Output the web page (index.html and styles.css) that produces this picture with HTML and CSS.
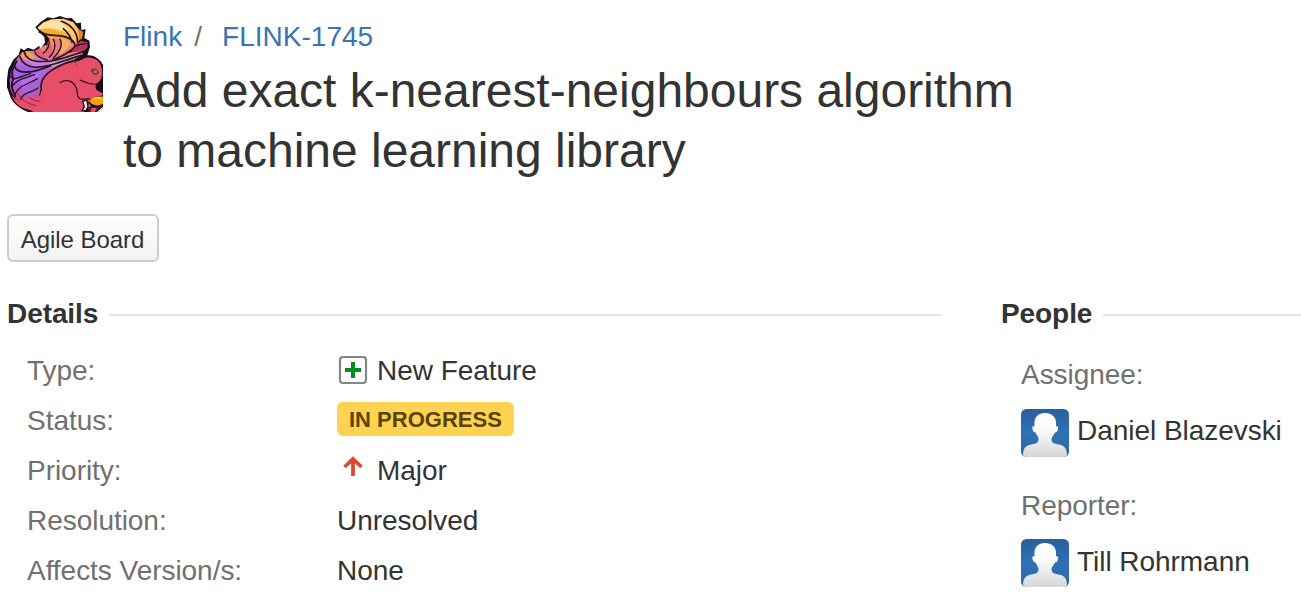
FILE: index.html
```html
<!DOCTYPE html>
<html lang="en">
<head>
<meta charset="utf-8">
<title>FLINK-1745</title>
<link rel="stylesheet" href="styles.css">
</head>
<body>
<svg width="0" height="0" class="defs" aria-hidden="true">
  <defs>
    <linearGradient id="avatar-bg" x1="0" y1="0" x2="0" y2="1"><stop offset="0" stop-color="#295f9c"/><stop offset=".5" stop-color="#2f72b5"/><stop offset="1" stop-color="#2b67a6"/></linearGradient>
    <linearGradient id="avatar-fg" x1="0" y1="0" x2="0" y2="1"><stop offset="0" stop-color="#fff"/><stop offset=".4" stop-color="#fafafa"/><stop offset="1" stop-color="#d6d6d6"/></linearGradient>
    <symbol id="person" viewBox="0 0 48 48">
      <rect width="48" height="48" rx="5.500" fill="url(#avatar-bg)"/>
      <path d="M24 4C17.500 4 13.500 8 13.500 13.500V17C11.300 17 11 18 11.500 20C12 22.500 13 23.500 14.500 23.500C15.500 26 17.500 28 17.500 30C17.500 34 15 34.500 10 35.500C4 37 2.500 39 2 46Q2.500 48 5 48H43Q45.500 48 46 46C45.500 39 44 37 38 35.500C33 34.500 30.500 34 30.500 30C30.500 28 33 26 34 23.500C35.500 23.500 36.500 22.500 37 20C37.300 18 37 17 35 17V13.500C35 8 30.500 4 24 4Z" fill="url(#avatar-fg)"/>
    </symbol>
  </defs>
</svg>
<header class="header">
  <svg class="project-avatar" viewBox="21 24 288 288">
    <defs>
      <linearGradient id="tail" gradientUnits="userSpaceOnUse" x1="90" y1="120" x2="70" y2="280">
        <stop offset="0" stop-color="#e58a78"/><stop offset=".25" stop-color="#bf70c8"/><stop offset=".45" stop-color="#a862e0"/><stop offset=".75" stop-color="#ab5bd2"/><stop offset="1" stop-color="#e04f78"/>
      </linearGradient>
      <linearGradient id="curl" gradientUnits="userSpaceOnUse" x1="170" y1="35" x2="160" y2="160">
        <stop offset="0" stop-color="#ffd98a"/><stop offset=".35" stop-color="#fbae42"/><stop offset=".6" stop-color="#f0856a"/><stop offset="1" stop-color="#dc6c8c"/>
      </linearGradient>
      <filter id="soften" x="0" y="0" width="1" height="1"><feGaussianBlur stdDeviation="1.900"/></filter>
    </defs>
    <g filter="url(#soften)">
      <!-- outline -->
      <path d="M106 58L122 42L143 28L160 31L180 24L200 31L215 30L230 46L243 44L244 66L257 64L253 90L268 98L270 116L262 142C284 140 300 154 310 172V312H84C57 301 36 283 30 263L21 238V215L25 184L40 155L56 140L62 121L72 127L84 119L101 125L118 113L120 124L135 104L133 88L118 72Z" fill="#171015"/>
      <!-- lower tail -->
      <path d="M29 215L33 188L46 159L66 133L84 128L103 129L119 121L138 110L160 140L222 132L256 122L246 141L212 162L160 182L132 212L122 244L114 275L89 290C58 286 36 264 31 244Z" fill="url(#tail)"/>
      <path d="M70 132L84 130L108 147L104 158L76 156L62 147Z" fill="#f0a05c"/>
      <path d="M104 130L122 123L142 143L136 155L116 150Z" fill="#e85d78"/>
      <path d="M84 160L106 149L142 158L196 153L150 174L102 178Z" fill="#c77fdc"/>
      <path d="M148 166L204 148L250 130L240 143L200 160L150 181Z" fill="#dba0b4"/>
      <path d="M52 170L78 178L104 180L88 192L58 196L42 210Z" fill="#a35ee4"/>
      <path d="M62 214L96 196L126 190L106 216L66 244Z" fill="#b36dea"/>
      <path d="M62 262L84 236L116 226L113 246L84 262Z" fill="#a862d8"/>
      <!-- upper curl -->
      <path d="M113 59L130 43L155 34L190 32L220 43L236 64L240 92L226 116L196 140L160 156L142 146L126 134L142 112L146 90L133 74Z" fill="url(#curl)"/>
      <path d="M113 59C132 40 160 37 184 42C206 47 211 62 200 74C177 62 146 56 118 65Z" fill="#ffe3a4"/>
      <path d="M119 66C148 58 170 66 190 82C178 87 158 84 145 80L132 74Z" fill="#ffab18"/>
      <path d="M190 41C217 45 231 66 233 90L224 108L209 84C206 69 202 58 190 51Z" fill="#ffc670"/>
      <path d="M158 93C178 90 190 101 192 116L172 138L154 146C168 127 170 110 158 93Z" fill="#f1787c"/>
      <path d="M180 92C196 92 208 100 212 112L188 134L174 140C188 124 188 108 180 92Z" fill="#f6b262"/>
      <path d="M132 132C144 126 149 118 150 104C160 121 154 138 143 147Z" fill="#f05a74"/>
      <path d="M234 62L250 72L246 92L238 96Z" fill="#e08a1c"/>
      <path d="M222 114L242 98L262 102L263 118L250 130L214 132Z" fill="#b83258"/>
      <!-- fur strands -->
      <g fill="none" stroke="#211225" stroke-width="4" stroke-linecap="round">
        <path d="M118 72C140 84 165 80 194 86C212 91 224 103 226 114M184 40C212 50 232 72 233 104M190 62C202 72 212 86 216 102M226 114C212 132 190 144 158 156" stroke-width="5"/>
        <path d="M146 92C150 108 144 124 130 136M160 94C170 112 162 136 148 148M180 93C190 111 178 134 160 150M230 112L258 106"/>
        <path d="M72 130C76 148 88 158 112 160C160 164 196 148 252 130M60 146C66 166 80 176 108 178C160 176 190 156 244 142M44 172C46 190 68 196 100 190C122 186 138 178 152 174" stroke-width="5"/>
        <path d="M104 132C110 146 124 152 142 156M30 204C40 222 62 204 92 197M36 236C52 212 72 212 104 200M46 258C58 230 84 230 112 212M62 274C70 252 92 256 114 240"/>
        <path d="M50 160C38 176 32 196 40 214C30 230 38 250 46 264" stroke-width="6"/>
      </g>
      <!-- body -->
      <path d="M92 307C58 301 43 284 35 262C55 284 75 284 94 272C118 268 126 262 123 239C120 210 151 183 186 171C214 161 240 160 250 152C262 148 270 148 278 151C295 155 304 168 306 187C308 208 302 220 290 226C284 238 286 246 297 250L310 257L302 266L281 276L271 296L250 312H100Z" fill="#e84e6b"/>
      <g fill="none" stroke="#24101a" stroke-linecap="round">
        <path d="M124 246C116 210 151 184 193 167C215 158 232 160 246 150" stroke-width="5"/>
        <path d="M180 224C200 211 221 219 229 240C234 254 229 266 240 272C248 276 258 272 268 272M240 216C259 225 280 231 294 228" stroke-width="3.500"/>
        <path d="M54 258C63 275 83 288 106 292M89 268C98 276 108 280 121 280" stroke="#8a2346" stroke-width="3"/>
        <path d="M222 160L232 174" stroke="#9e3150" stroke-width="3"/>
      </g>
      <path d="M273 184C282 178 295 183 297 196L287 202C278 199 272 193 273 184Z" fill="#703d3b"/>
      <circle cx="286" cy="191" r="5" fill="#a88446"/>
      <!-- paw and nut -->
      <path d="M248 280L261 276L264 297L258 308H246L253 297Z" fill="#f1e8df" stroke="#171015" stroke-width="4"/>
      <path d="M264 284C270 268 290 262 311 264V292C298 301 276 299 264 284Z" fill="#171015"/>
      <path d="M267 280C276 267 291 264 311 266V286C298 296 276 294 267 280Z" fill="#ff9b0a"/>
      <path d="M278 274C288 268 298 269 306 273" stroke="#ffc43b" stroke-width="7" fill="none"/>
      <path d="M266 296L300 297L290 312H262Z" fill="#4a1c2a"/>
      <path d="M274 300L290 300L284 312H272Z" fill="#e84e6b"/>
    </g>
    <path d="M291 312Q300 304 309 296V312Z" fill="#fff"/>
  </svg>
  <div class="heading">
    <nav class="breadcrumb"><a href="#">Flink</a><span class="slash">/</span><a href="#">FLINK-1745</a></nav>
    <h1 class="title">Add exact k-nearest-neighbours algorithm<br>to machine learning library</h1>
  </div>
</header>
<button class="button" type="button">Agile Board</button>
<main class="columns">
  <section class="details">
    <h2 class="section-title">Details</h2>
    <dl class="fields">
      <dt>Type:</dt>
      <dd><svg class="icon" viewBox="0 0 32 32"><rect x="3" y="3" width="26" height="26" rx="3" fill="#fff" stroke="#858585" stroke-width="2.200"/><path d="M16 8V24M8 16H24" stroke="#078c24" stroke-width="4"/></svg>New Feature</dd>
      <dt>Status:</dt>
      <dd><span class="status">IN PROGRESS</span></dd>
      <dt>Priority:</dt>
      <dd><svg class="icon" viewBox="0 0 32 32"><path d="M16 22V5.500M7.500 13L16 4.800L24.500 13" fill="none" stroke="#d94a38" stroke-width="3.800"/></svg>Major</dd>
      <dt>Resolution:</dt>
      <dd>Unresolved</dd>
      <dt>Affects Version/s:</dt>
      <dd>None</dd>
    </dl>
  </section>
  <section class="people">
    <h2 class="section-title">People</h2>
    <dl class="persons">
      <dt>Assignee:</dt>
      <dd><svg class="avatar"><use href="#person"/></svg><span class="name">Daniel Blazevski</span></dd>
      <dt>Reporter:</dt>
      <dd><svg class="avatar"><use href="#person"/></svg><span class="name">Till Rohrmann</span></dd>
    </dl>
  </section>
</main>
</body>
</html>
```
FILE: styles.css
```css
* { box-sizing: border-box; }
body {
  margin: 0;
  padding: 16px 0 0 7px;
  height: 598px;
  overflow: hidden;
  background: #fff;
  color: #333;
  font: 28px/40px "Liberation Sans", Arial, sans-serif;
}
.defs { position: absolute; }
.header { display: flex; gap: 20px; height: 198px; }
.project-avatar { width: 96px; height: 96px; border-radius: 6px; flex: none; }
.breadcrumb { height: 45px; line-height: 42px; letter-spacing: 0.02px; }
.breadcrumb a { color: #3b73af; text-decoration: none; }
.slash { color: #707070; margin: 0 20px 0 12px; }
.title { margin: 0; font-size: 48px; font-weight: 400; line-height: 60px; letter-spacing: -0.01px; white-space: nowrap; }
.button {
  display: block;
  width: 152px;
  height: 48px;
  padding: 3px 1px 0 0;
  border: 2px solid #ccc;
  border-radius: 6px;
  background: linear-gradient(#fff, #f2f2f2);
  color: #333;
  font: 24px/40px "Liberation Sans", Arial, sans-serif;
  letter-spacing: -0.05px;
  white-space: nowrap;
}
.columns { display: grid; grid-template-columns: 934px 300px; column-gap: 60px; margin-top: 32px; }
.section-title { display: flex; align-items: center; gap: 11px; margin: 0; font-size: 28px; line-height: 40px; letter-spacing: -0.08px; }
.section-title::after { content: ""; flex: 1; height: 2px; margin-top: 2px; background: #e6e6e6; }
.fields { display: grid; grid-template-columns: 310px 1fr; grid-auto-rows: 50px; line-height: 50px; letter-spacing: -0.04px; margin: 12px 0 0 20px; }
dt { color: #707070; }
dd { display: flex; align-items: center; margin: 0; white-space: nowrap; }
.icon { width: 32px; height: 32px; margin: -2px 8px 0 0; flex: none; }
.status {
  height: 34px;
  margin-top: -4px;
  padding: 0 12px;
  border-radius: 6px;
  background: #ffd351;
  color: #594300;
  font-size: 22px;
  font-weight: 700;
  line-height: 35px;
  letter-spacing: 0;
}
.persons { margin: 21px 0 0 20px; letter-spacing: -0.04px; }
.persons dd { height: 48px; margin: 14px 0 29px; gap: 8px; }
.persons dt + dd:last-child { margin-top: 13px; }
.name { margin-top: -4px; }
dd:last-child .name { margin-top: -2px; }
.avatar { width: 48px; height: 48px; flex: none; }
```
